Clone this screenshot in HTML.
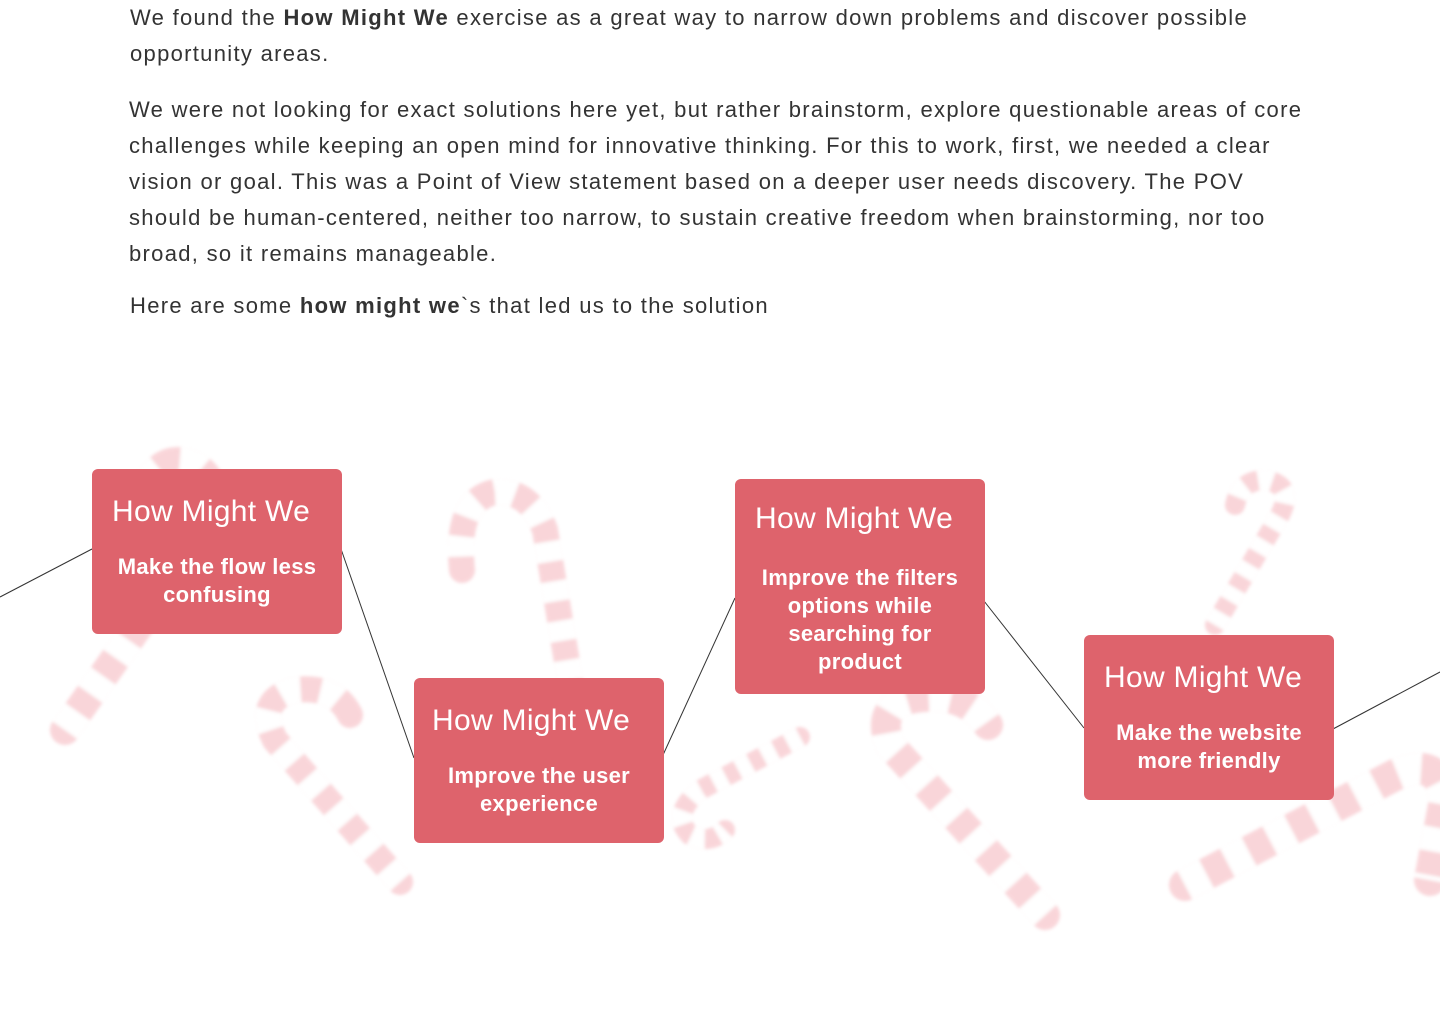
<!DOCTYPE html>
<html><head><style>
body{margin:0;width:1440px;height:1011px;background:#fff;overflow:hidden;position:relative;font-family:"Liberation Sans",sans-serif;color:#333}
p{position:absolute;margin:0;font-size:22px;line-height:36px;white-space:nowrap;letter-spacing:1.3px}
.card{position:absolute;width:250px;background:#de636c;border-radius:6px;color:#fff;text-align:center;box-sizing:border-box}
.card h3{margin:0;font-weight:normal;font-size:30px;line-height:34px;text-align:left;padding-left:20px;letter-spacing:0.3px}
.card div{font-size:22px;line-height:28px;font-weight:bold;padding:0 10px;letter-spacing:0.3px}
svg{position:absolute;left:0;top:0}
</style></head><body>
<p style="left:130px;top:0px">We found the <b>How Might We</b> exercise as a great way to narrow down problems and discover possible<br>opportunity areas.</p>
<p style="left:129px;top:92px">We were not looking for exact solutions here yet, but rather brainstorm, explore questionable areas of core<br>challenges while keeping an open mind for innovative thinking. For this to work, first, we needed a clear<br>vision or goal. This was a Point of View statement based on a deeper user needs discovery. The POV<br>should be human-centered, neither too narrow, to sustain creative freedom when brainstorming, nor too<br>broad, so it remains manageable.</p>
<p style="left:130px;top:288px">Here are some <b>how might we</b>`s that led us to the solution</p>
<svg width="1440" height="1011">
<defs><filter id="b"><feGaussianBlur stdDeviation="1.5"/></filter>
<path id="c1" d="M65,730 L185,560 Q230,495 200,470 Q170,450 150,480"/>
<path id="c2" d="M400,882 L275,740 Q255,700 295,690 Q335,685 350,715"/>
<path id="c3" d="M570,680 L545,530 Q530,490 495,492 Q455,500 462,570"/>
<path id="c4" d="M800,737 L700,790 Q670,815 690,835 Q710,845 725,830"/>
<path id="c5" d="M1045,915 L890,745 Q875,705 915,698 Q965,690 988,725"/>
<path id="c6" d="M1215,625 L1280,515 Q1295,485 1265,480 Q1240,480 1235,505"/>
<path id="c7" d="M1185,885 L1395,775 Q1440,755 1445,800 L1430,880"/>
</defs>
<g fill="none" stroke-linecap="round" filter="url(#b)" opacity="0.35">
<g stroke-width="30" stroke="#f08a95"><use href="#c1"/><use href="#c5"/></g>
<g stroke-width="30" stroke="#fff" stroke-linecap="butt" stroke-dasharray="22 22"><use href="#c1"/><use href="#c5"/></g>
<g stroke-width="26" stroke="#f08a95"><use href="#c2"/><use href="#c3"/></g>
<g stroke-width="26" stroke="#fff" stroke-linecap="butt" stroke-dasharray="20 20"><use href="#c2"/><use href="#c3"/></g>
<g stroke-width="20" stroke="#f08a95"><use href="#c4"/><use href="#c6"/></g>
<g stroke-width="20" stroke="#fff" stroke-linecap="butt" stroke-dasharray="14 14"><use href="#c4"/><use href="#c6"/></g>
<g stroke-width="32" stroke="#f08a95"><use href="#c7"/></g>
<g stroke-width="32" stroke="#fff" stroke-linecap="butt" stroke-dasharray="24 24"><use href="#c7"/></g>
</g>
<g stroke="#333" stroke-width="1" fill="none">
<path d="M0,597 L92,549"/><path d="M341,549 L414,758"/><path d="M663,755 L735,598"/><path d="M984,601 L1084,728"/><path d="M1333,729 L1440,672"/>
</g>
</svg>
<div class="card" style="left:92px;top:469px;height:165px"><h3 style="padding-top:26px">How Might We</h3><div style="margin-top:24px">Make the flow less confusing</div></div>
<div class="card" style="left:414px;top:678px;height:165px"><h3 style="padding-top:26px;padding-left:18px">How Might We</h3><div style="margin-top:24px">Improve the user experience</div></div>
<div class="card" style="left:735px;top:479px;height:215px"><h3 style="padding-top:23px">How Might We</h3><div style="margin-top:28px">Improve the filters options while searching for product</div></div>
<div class="card" style="left:1084px;top:635px;height:165px"><h3 style="padding-top:26px">How Might We</h3><div style="margin-top:24px">Make the website more friendly</div></div>
</body></html>
